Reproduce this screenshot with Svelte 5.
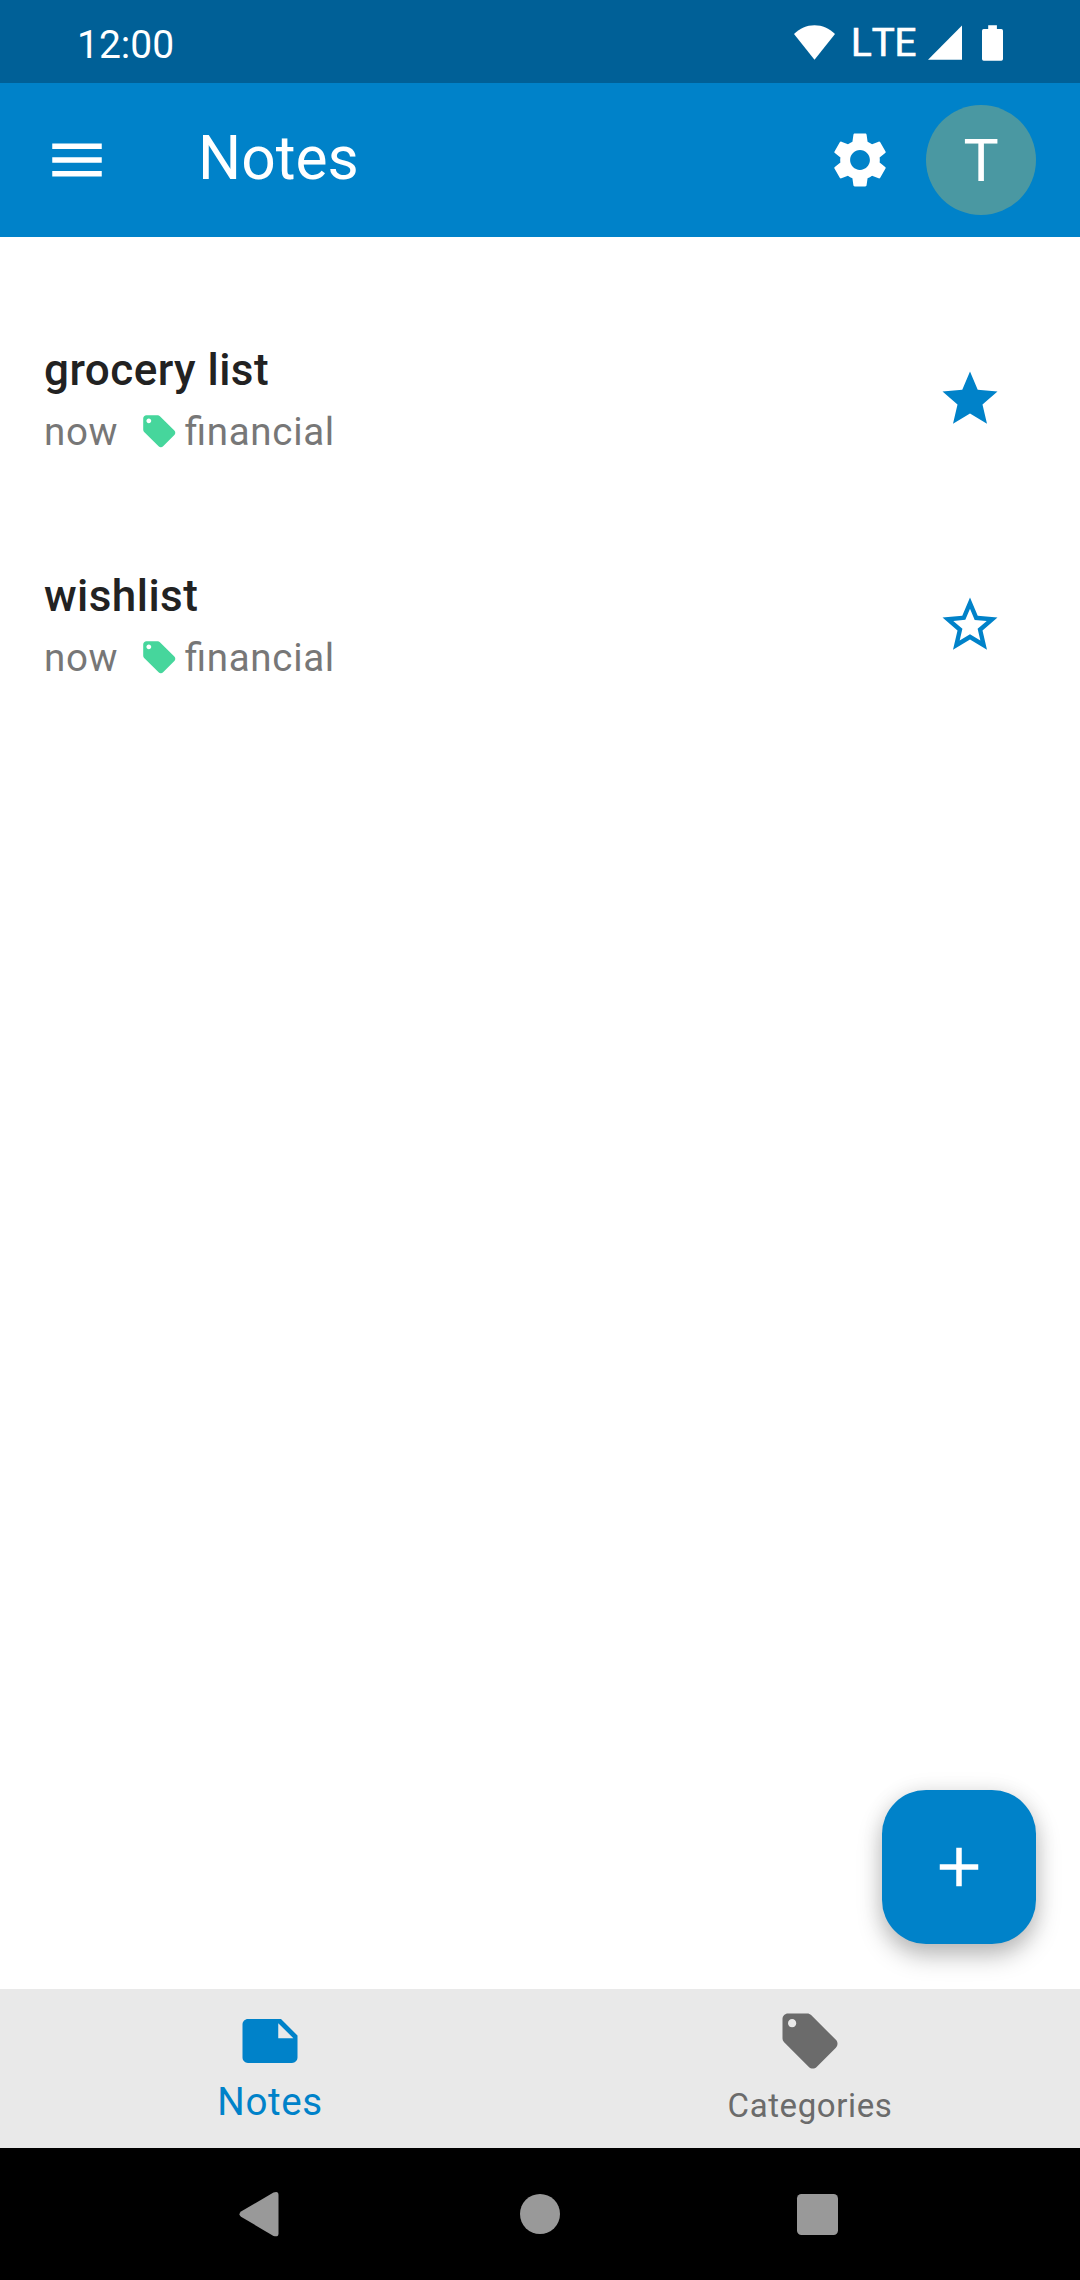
<script>
  const notes = [
    { title: 'grocery list', modified: 'now', category: 'financial', favorite: true },
    { title: 'wishlist', modified: 'now', category: 'financial', favorite: false }
  ];

  const tag =
    'M21.41 11.58l-9-9C12.05 2.22 11.55 2 11 2H4c-1.1 0-2 .9-2 2v7c0 .55.22 1.05.59 1.42l9 9c.36.36.86.58 1.41.58.55 0 1.05-.22 1.41-.59l7-7c.37-.36.59-.86.59-1.41 0-.55-.23-1.06-.59-1.42zM5.5 7C4.67 7 4 6.33 4 5.5S4.67 4 5.5 4 7 4.67 7 5.5 6.33 7 5.5 7z';
  const star =
    'M12 17.27L18.18 21l-1.64-7.03L22 9.24l-7.19-.61L12 2 9.19 8.63 2 9.24l5.46 4.73L5.82 21z';
  const starOutline =
    'M22 9.24l-7.19-.62L12 2 9.19 8.63 2 9.24l5.46 4.73L5.82 21 12 17.27 18.18 21l-1.63-7.03L22 9.24zM12 15.4l-3.76 2.27 1-4.28-3.32-2.88 4.38-.38L12 6.1l1.71 4.04 4.38.38-3.32 2.88 1 4.28L12 15.4z';
  const note =
    'M22 10l-6-6H4c-1.1 0-2 .9-2 2v12.01c0 1.1.9 1.99 2 1.99l16-.01c1.1 0 2-.89 2-1.99v-8zm-7-4.5l5.5 5.5H15V5.5z';
  const gear =
    'M19.14,12.94c0.04-0.3,0.06-0.61,0.06-0.94c0-0.32-0.02-0.64-0.07-0.94l2.03-1.58c0.18-0.14,0.23-0.41,0.12-0.61l-1.92-3.32c-0.12-0.22-0.37-0.29-0.59-0.22l-2.39,0.96c-0.5-0.38-1.03-0.7-1.62-0.94L14.4,2.81c-0.04-0.24-0.24-0.41-0.48-0.41h-3.84c-0.24,0-0.43,0.17-0.47,0.41L9.25,5.35C8.66,5.59,8.12,5.92,7.63,6.29L5.24,5.33c-0.22-0.08-0.47,0-0.59,0.22L2.74,8.87C2.62,9.08,2.66,9.34,2.86,9.48l2.03,1.58C4.84,11.36,4.8,11.69,4.8,12s0.02,0.64,0.07,0.94l-2.03,1.58c-0.18,0.14-0.23,0.41-0.12,0.61l1.92,3.32c0.12,0.22,0.37,0.29,0.59,0.22l2.39-0.96c0.5,0.38,1.03,0.7,1.62,0.94l0.36,2.54c0.05,0.24,0.24,0.41,0.48,0.41h3.84c0.24,0,0.44-0.17,0.47-0.41l0.36-2.54c0.59-0.24,1.13-0.56,1.62-0.94l2.39,0.96c0.22,0.08,0.47,0,0.59-0.22l1.92-3.32c0.12-0.22,0.07-0.47-0.12-0.61L19.14,12.94z M12,15.6c-1.98,0-3.6-1.62-3.6-3.6s1.62-3.6,3.6-3.6s3.6,1.62,3.6,3.6S13.98,15.6,12,15.6z';
</script>

<div class="screen">
  <div class="status">
    <span class="clock">12:00</span>
    <div class="indicators">
      <svg class="wifi" width="41" height="35" viewBox="0 0 41 35"><path d="M20.5 34.7L0 8.9C6 3.400 12.500.300 20.500.300S35 3.400 41 8.900z" /></svg>
      <span class="lte">LTE</span>
      <svg class="signal" width="34" height="35" viewBox="0 0 34 35"><path d="M34 0.500V34.700H0z" /></svg>
      <svg class="battery" width="21" height="36" viewBox="0 0 21 36"><path d="M6.200 0.300h8.700V4h4.400q1.700 0 1.700 1.700v28.300q0 1.700-1.700 1.700H1.700Q0 35.700 0 34V5.700Q0 4 1.700 4h4.500z" /></svg>
    </div>
  </div>

  <header class="appbar">
    <button class="icon-button" aria-label="Menu">
      <svg class="icon" viewBox="0 0 24 24"><path d="M3 18h18v-2H3v2zm0-5h18v-2H3v2zm0-7v2h18V6H3z" /></svg>
    </button>
    <h1>Notes</h1>
    <button class="icon-button" aria-label="Settings">
      <svg class="icon" viewBox="0 0 24 24"><path d={gear} /></svg>
    </button>
    <button class="avatar">T</button>
  </header>

  <main>
    <ul class="notes">
      {#each notes as n}
        <li>
          <div class="text">
            <div class="title">{n.title}</div>
            <div class="meta">
              <span class="when">{n.modified}</span>
              <svg class="tag" viewBox="0 0 24 24"><path d={tag} /></svg>
              <span class="category">{n.category}</span>
            </div>
          </div>
          <svg class="icon star" viewBox="0 0 24 24"><path d={n.favorite ? star : starOutline} /></svg>
        </li>
      {/each}
    </ul>
    <button class="fab" aria-label="New note">
      <svg class="icon" viewBox="0 0 24 24"><path d="M19 13h-6v6h-2v-6H5v-2h6V5h2v6h6v2z" /></svg>
    </button>
  </main>

  <nav class="tabs">
    <div class="tab active">
      <svg class="icon" viewBox="0 0 24 24"><path d={note} /></svg>
      <span>Notes</span>
    </div>
    <div class="tab">
      <svg class="icon" viewBox="0 0 24 24"><path d={tag} /></svg>
      <span>Categories</span>
    </div>
  </nav>

  <div class="system">
    <svg viewBox="0 0 60 60"><path d="M8 27.600L40.500 8.600Q45.500 6.600 45.500 11V49.500Q45.500 53.500 40.500 51.900L8 32.800Q5 30.200 8 27.600z" /></svg>
    <svg viewBox="0 0 60 60"><circle cx="30" cy="30" r="20" /></svg>
    <svg viewBox="0 0 60 60"><rect x="9" y="10" width="41" height="41" rx="4.500" /></svg>
  </div>
</div>

<style>
  :global(body) {
    margin: 0;
  }
  .screen {
    display: flex;
    flex-direction: column;
    width: 1080px;
    height: 2280px;
    background: #fff;
    font-family: Roboto, sans-serif;
    overflow: hidden;
  }
  button {
    border: 0;
    padding: 0;
    font: inherit;
    color: inherit;
    background: none;
  }
  svg {
    display: block;
    fill: currentColor;
    flex: none;
  }
  .icon {
    width: 66px;
    height: 66px;
  }

  .status {
    box-sizing: border-box;
    height: 83px;
    flex: none;
    display: flex;
    justify-content: space-between;
    padding: 0 77px;
    background: #006097;
    color: #fff;
    font-size: 38.5px;
    line-height: 83px;
  }
  .clock {
    padding-top: 4px;
    font-size: 39px;
  }
  .indicators {
    display: flex;
    align-items: flex-start;
  }
  .indicators svg {
    margin-top: 25px;
  }
  .lte {
    margin: 1px 11.5px 0 16px;
    font-kerning: none;
    -webkit-text-stroke: 0.7px currentColor;
  }
  .battery {
    margin-left: 20px;
  }

  .appbar {
    box-sizing: border-box;
    height: 154px;
    flex: none;
    display: flex;
    align-items: center;
    padding: 0 44px;
    background: #0082c9;
    color: #fff;
  }
  h1 {
    flex: 1;
    margin: 0 0 3px 88px;
    font-size: 60.5px;
    font-weight: 400;
    line-height: 80px;
  }
  .avatar {
    width: 110px;
    height: 110px;
    margin-left: 33px;
    border-radius: 50%;
    background: #4a98a2;
    font-size: 59px;
    line-height: 112px;
  }

  main {
    position: relative;
    flex: 1;
  }
  .notes {
    list-style: none;
    margin: 0;
    padding: 49px 77px 0 44px;
  }
  li {
    height: 226px;
    display: flex;
    align-items: center;
    justify-content: space-between;
  }
  .text {
    padding-bottom: 5px;
  }
  .title {
    font-size: 44px;
    font-weight: 500;
    line-height: 60px;
    letter-spacing: 0.45px;
    color: #222;
  }
  .meta {
    display: flex;
    align-items: flex-start;
    margin-top: 10px;
    font-size: 38.5px;
    line-height: 44px;
    letter-spacing: 0.69px;
    color: #777;
  }
  .tag {
    width: 38.5px;
    height: 38.5px;
    margin: 2px 6px 0 22px;
    color: #46d69c;
  }
  .category {
    font-feature-settings: 'liga' 1;
  }
  .star {
    color: #0082c9;
  }
  .fab {
    position: absolute;
    right: 44px;
    bottom: 44.5px;
    width: 154px;
    height: 154px;
    display: grid;
    place-items: center;
    border-radius: 44px;
    background: #0082c9;
    color: #fff;
    box-shadow:
      0 12px 24px rgba(0, 0, 0, 0.26),
      0 0 22px rgba(0, 0, 0, 0.08);
  }

  .tabs {
    height: 159.500px;
    flex: none;
    display: grid;
    grid-template-columns: 1fr 1fr;
    background: #e9e9e9;
    color: #6b6b6b;
  }
  .tab {
    display: flex;
    flex-direction: column;
    align-items: center;
    padding-top: 19.500px;
    gap: 10px;
    font-size: 33px;
    line-height: 44px;
    letter-spacing: 0.6px;
  }
  .active {
    gap: 6px;
    font-size: 38.5px;
    color: #0082c9;
  }

  .system {
    height: 132px;
    flex: none;
    display: grid;
    grid-template-columns: repeat(3, 277.5px);
    place-content: center;
    justify-items: center;
    background: #000;
    color: #999;
  }
  .system svg {
    width: 60px;
    height: 60px;
  }
</style>
